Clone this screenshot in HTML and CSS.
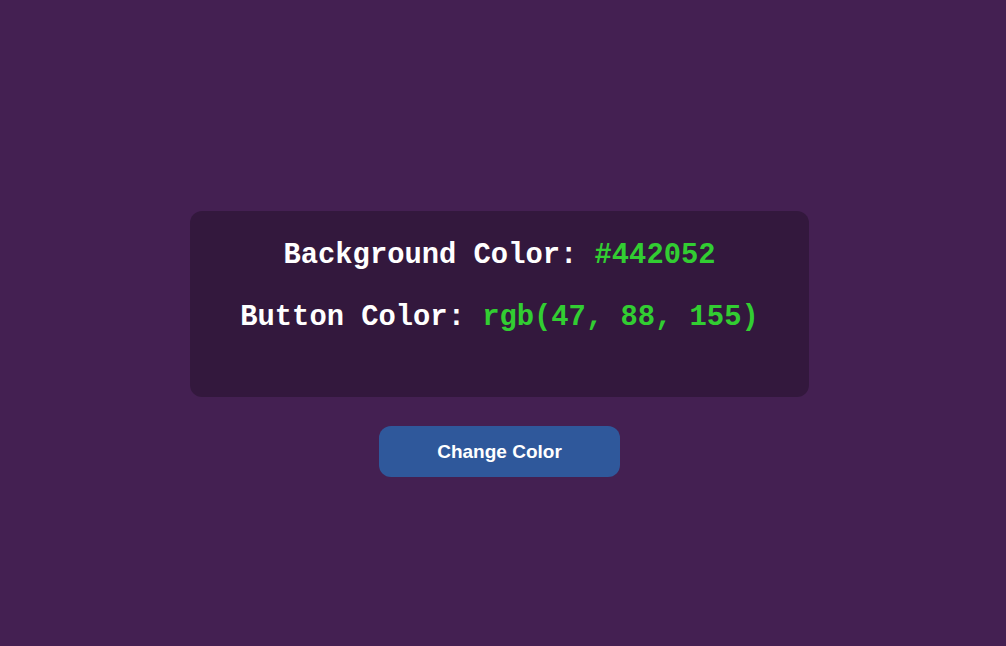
FILE: index.html
```html
<!DOCTYPE html>
<html lang="en">
<head>
<meta charset="utf-8">
<title>Color Changer</title>
<link rel="stylesheet" href="styles.css">
</head>
<body>
<main class="page">
  <section class="card">
    <p class="line">Background Color: <span class="value">#442052</span></p>
    <p class="line">Button Color: <span class="value">rgb(47, 88, 155)</span></p>
  </section>
  <button class="btn" type="button">Change Color</button>
</main>
</body>
</html>
```
FILE: styles.css
```css
html, body {
  margin: 0;
  padding: 0;
}
body {
  background: #442052;
  min-height: 100vh;
  font-family: "Liberation Sans", Arial, sans-serif;
}
.page {
  display: flex;
  flex-direction: column;
  align-items: center;
  gap: 29px;
  padding: 211px 7px 0 0;
}
.card {
  background: rgba(0, 0, 0, 0.25);
  border-radius: 12px;
  padding: 28px 50px 63px;
  display: flex;
  flex-direction: column;
  align-items: center;
  gap: 29px;
}
.line {
  margin: 0;
  font-family: "Liberation Mono", "Courier New", monospace;
  font-weight: bold;
  font-size: 28.8px;
  color: #ffffff;
  white-space: nowrap;
}
.value {
  color: #32cd32;
}
.btn {
  width: 241px;
  height: 51px;
  border: none;
  border-radius: 12px;
  background: rgb(47, 88, 155);
  color: #ffffff;
  font-family: "Liberation Sans", Arial, sans-serif;
  font-weight: bold;
  font-size: 19px;
  cursor: pointer;
}
```
